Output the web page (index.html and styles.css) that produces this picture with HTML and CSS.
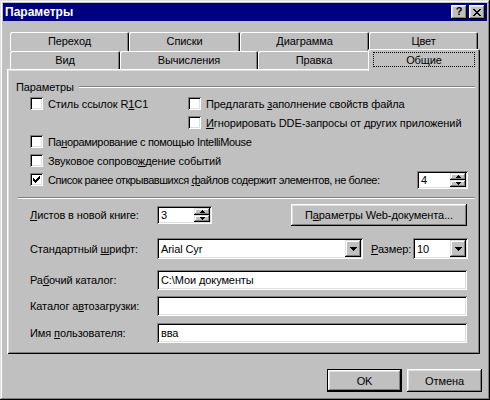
FILE: index.html
```html
<!DOCTYPE html>
<html lang="ru">
<head>
<meta charset="utf-8">
<title>Параметры</title>
<link rel="stylesheet" href="styles.css">
</head>
<body>
<div class="window">
  <div class="titlebar">
    <span class="title">Параметры</span>
    <span class="tbtn help">?</span>
    <span class="tbtn close"><svg width="8" height="7" viewBox="0 0 8 7" shape-rendering="crispEdges"><path d="M0 0h2v1H0zM6 0h2v1H6zM1 1h2v1H1zM5 1h2v1H5zM2 2h4v1H2zM3 3h2v1H3zM2 4h4v1H2zM1 5h2v1H1zM5 5h2v1H5zM0 6h2v1H0zM6 6h2v1H6z" fill="#000"/></svg></span>
  </div>
  <div class="client">
    <div class="tabs">
      <div class="tabrow back">
        <div class="tab t1">Переход</div>
        <div class="tab t2">Списки</div>
        <div class="tab t3">Диаграмма</div>
        <div class="tab t4">Цвет</div>
      </div>
      <div class="tabrow front">
        <div class="tab f1">Вид</div>
        <div class="tab f2">Вычисления</div>
        <div class="tab f3">Правка</div>
        <div class="tab f4 selected"><span class="focus">Общие</span></div>
      </div>
    </div>
    <div class="panel">
      <div class="group-head"><span>Параметры</span><i class="groove"></i></div>
      <div class="cbgrid">
        <div class="cb"><span class="box"></span><span>Стиль ссылок R<u>1</u>C1</span></div>
        <div class="cb"><span class="box"></span><span>Предлагать <u>з</u>аполнение свойств файла</span></div>
        <div></div>
        <div class="cb"><span class="box"></span><span><u>И</u>гнорировать DDE-запросы от других приложений</span></div>
      </div>
      <div class="cb row"><span class="box"></span><span class="tight-1">Па<u>н</u>орамирование с помощью IntelliMouse</span></div>
      <div class="cb row"><span class="box"></span><span>Звуковое сопрово<u>ж</u>дение событий</span></div>
      <div class="cb row">
        <span class="box"><svg width="7" height="7" viewBox="0 0 7 7" shape-rendering="crispEdges"><path d="M6 0h1v1H6zM5 1h2v1H5zM0 2h1v1H0zM4 2h3v1H4zM0 3h2v1H0zM3 3h3v1H3zM0 4h5v1H0zM1 5h3v1H1zM2 6h1v1H2z" fill="#000"/></svg></span>
        <span class="tight-2">Список ранее открывавшихся <u>ф</u>айлов содержит элементов, не более:</span>
        <div class="field spin spin-files"><span class="val">4</span><span class="spinbtns"><span class="sbtn"><svg width="5" height="3" viewBox="0 0 5 3" shape-rendering="crispEdges"><path d="M2 0h1v1H2zM1 1h3v1H1zM0 2h5v1H0z" fill="#000"/></svg></span><span class="sbtn"><svg width="5" height="3" viewBox="0 0 5 3" shape-rendering="crispEdges"><path d="M0 0h5v1H0zM1 1h3v1H1zM2 2h1v1H2z" fill="#000"/></svg></span></span></div>
      </div>
      <i class="groove sep"></i>
      <div class="frow r-sheets">
        <span class="lbl"><u>Л</u>истов в новой книге:</span>
        <div class="field spin spin-sheets"><span class="val">3</span><span class="spinbtns"><span class="sbtn"><svg width="5" height="3" viewBox="0 0 5 3" shape-rendering="crispEdges"><path d="M2 0h1v1H2zM1 1h3v1H1zM0 2h5v1H0z" fill="#000"/></svg></span><span class="sbtn"><svg width="5" height="3" viewBox="0 0 5 3" shape-rendering="crispEdges"><path d="M0 0h5v1H0zM1 1h3v1H1zM2 2h1v1H2z" fill="#000"/></svg></span></span></div>
        <span class="btn web">П<u>а</u>раметры Web-документа...</span>
      </div>
      <div class="frow r-font">
        <span class="lbl">Стандартный <u>ш</u>рифт:</span>
        <div class="field combo combo-font"><span class="val">Arial Cyr</span><span class="dd"><svg width="7" height="4" viewBox="0 0 7 4" shape-rendering="crispEdges"><path d="M0 0h7v1H0zM1 1h5v1H1zM2 2h3v1H2zM3 3h1v1H3z" fill="#000"/></svg></span></div>
        <span class="lbl-size"><u>Р</u>азмер:</span>
        <div class="field combo combo-size"><span class="val">10</span><span class="dd"><svg width="7" height="4" viewBox="0 0 7 4" shape-rendering="crispEdges"><path d="M0 0h7v1H0zM1 1h5v1H1zM2 2h3v1H2zM3 3h1v1H3z" fill="#000"/></svg></span></div>
      </div>
      <div class="frow r-dir">
        <span class="lbl">Ра<u>б</u>очий каталог:</span>
        <div class="field text"><span class="val">C:\Мои документы</span></div>
      </div>
      <div class="frow r-auto">
        <span class="lbl">Каталог а<u>в</u>тозагрузки:</span>
        <div class="field text"><span class="val"></span></div>
      </div>
      <div class="frow r-user">
        <span class="lbl">Имя <u>п</u>ользователя:</span>
        <div class="field text"><span class="val">вва</span></div>
      </div>
    </div>
    <div class="buttons">
      <span class="btn default">OK</span>
      <span class="btn">Отмена</span>
    </div>
  </div>
</div>
</body>
</html>
```
FILE: styles.css
```css
* { box-sizing: border-box; }
html, body { margin: 0; padding: 0; }
body {
  width: 490px;
  height: 400px;
  overflow: hidden;
  background: #c0c0c0;
  font-family: "Liberation Sans", Arial, sans-serif;
  font-size: 11px;
  letter-spacing: -0.1px;
  color: #000;
}
u { text-decoration: underline; text-underline-offset: 1px; }
.tight-1 { letter-spacing: -0.35px; }
.tight-2 { letter-spacing: -0.45px; }

.window {
  width: 490px;
  height: 400px;
  padding: 3px;
  background: #c0c0c0;
  box-shadow: inset -1px -1px #000, inset 1px 1px #dfdfdf, inset -2px -2px #808080, inset 2px 2px #fff;
  display: flex;
  flex-direction: column;
}

/* title bar */
.titlebar {
  height: 18px;
  background: #000080;
  display: flex;
  align-items: center;
  padding: 0 2px;
  gap: 2px;
}
.title {
  flex: 1;
  color: #fff;
  font-weight: bold;
  font-size: 12px;
  letter-spacing: 0;
}
.tbtn {
  width: 16px;
  height: 14px;
  background: #c0c0c0;
  box-shadow: inset -1px -1px #000, inset 1px 1px #fff, inset -2px -2px #808080, inset 2px 2px #dfdfdf;
  display: flex;
  align-items: center;
  justify-content: center;
  font-weight: bold;
  font-size: 11px;
  letter-spacing: 0;
  line-height: 1;
}
.tbtn.help { padding-bottom: 1px; }

/* client */
.client {
  flex: 1;
  padding: 11px 7px 0 4px;
  display: flex;
  flex-direction: column;
}

/* tabs */
.tabs { padding-left: 3px; }
.tabrow { display: flex; }
.tabrow.back { height: 19px; }
.tabrow.front { height: 18px; }
.tab {
  height: 100%;
  display: flex;
  align-items: center;
  justify-content: center;
  background: #c0c0c0;
  border-radius: 2px 2px 0 0;
  box-shadow: inset 1px 1px #fff, inset -1px 0 #000, inset -2px 0 #808080;
  padding-bottom: 1px;
}
.t1 { width: 119px; }
.t2 { width: 111px; }
.t3 { width: 129px; }
.t4 { width: 109px; }
.f1 { width: 110px; }
.f2 { width: 138px; }
.f3 { width: 112px; }
.f4 { width: 108px; }
.tab.selected {
  position: relative;
  z-index: 1;
  width: 112px;
  height: 22px;
  margin: -2px -2px 0 -2px;
  padding: 3px 5px 4px 5px;
  align-items: stretch;
}
.focus {
  flex: 1;
  border: 1px dotted #000;
  display: flex;
  align-items: center;
  justify-content: center;
}

/* panel */
.panel {
  height: 285px;
  padding: 2px;
  box-shadow: inset 1px 1px #fff, inset -1px -1px #000, inset 2px 2px #dfdfdf, inset -2px -2px #808080;
  display: flex;
  flex-direction: column;
}
.groove {
  display: block;
  height: 2px;
  border-top: 1px solid #808080;
  border-bottom: 1px solid #fff;
}
.group-head {
  margin-top: 8px;
  height: 15px;
  display: flex;
  align-items: center;
  padding-left: 7px;
  padding-right: 3px;
}
.group-head .groove { flex: 1; margin-left: 5px; }

.cbgrid {
  display: grid;
  grid-template-columns: 158px 1fr;
  grid-auto-rows: 19px;
  padding-left: 21px;
}
.cb {
  display: flex;
  align-items: center;
  height: 19px;
  white-space: nowrap;
}
.cb.row { padding-left: 21px; }
.box {
  flex: none;
  width: 13px;
  height: 13px;
  margin-right: 5px;
  background: #fff;
  box-shadow: inset 1px 1px #808080, inset -1px -1px #fff, inset 2px 2px #000, inset -2px -2px #dfdfdf;
  display: flex;
  align-items: center;
  justify-content: center;
}

.field {
  background: #fff;
  box-shadow: inset 1px 1px #808080, inset -1px -1px #fff, inset 2px 2px #000, inset -2px -2px #dfdfdf;
  display: flex;
  align-items: center;
  padding: 2px;
}
.field .val { flex: 1; padding-left: 2px; white-space: nowrap; }
.spin-files { flex: none; width: 51px; height: 18px; margin-left: auto; margin-right: 10px; }
.spin-sheets { flex: none; width: 55px; height: 18px; }
.spinbtns {
  flex: none;
  width: 16px;
  align-self: stretch;
  display: flex;
  flex-direction: column;
}
.sbtn {
  flex: 1;
  background: #c0c0c0;
  box-shadow: inset -1px -1px #000, inset 1px 1px #dfdfdf, inset -2px -2px #808080, inset 2px 2px #fff;
  display: flex;
  align-items: center;
  justify-content: center;
}
.sep { margin: 8px 3px 0 9px; }

.frow {
  display: flex;
  align-items: center;
  padding-left: 21px;
  white-space: nowrap;
}
.lbl { width: 127px; flex: none; }
.r-sheets { margin-top: 5px; height: 22px; }
.r-font { margin-top: 12px; height: 21px; }
.r-dir { margin-top: 11px; height: 20px; }
.r-auto { margin-top: 6px; height: 20px; }
.r-user { margin-top: 7px; height: 20px; }
.text { width: 310px; height: 20px; }
.combo { height: 21px; flex: none; }
.combo-font { width: 206px; }
.combo-size { width: 55px; margin-left: auto; margin-right: 10px; }
.lbl-size { margin-left: 8px; }
.dd {
  flex: none;
  width: 16px;
  height: 17px;
  background: #c0c0c0;
  box-shadow: inset -1px -1px #000, inset 1px 1px #dfdfdf, inset -2px -2px #808080, inset 2px 2px #fff;
  display: flex;
  align-items: center;
  justify-content: center;
}

.btn {
  height: 23px;
  background: #c0c0c0;
  box-shadow: inset -1px -1px #000, inset 1px 1px #fff, inset -2px -2px #808080, inset 2px 2px #dfdfdf;
  display: flex;
  align-items: center;
  justify-content: center;
  white-space: nowrap;
}
.web { flex: none; width: 176px; height: 22px; margin-left: auto; margin-right: 11px; }

.buttons {
  margin-top: 15px;
  margin-right: -2px;
  display: flex;
  justify-content: flex-end;
  gap: 5px;
}
.buttons .btn { width: 75px; }
.btn.default { border: 1px solid #000; }
```
